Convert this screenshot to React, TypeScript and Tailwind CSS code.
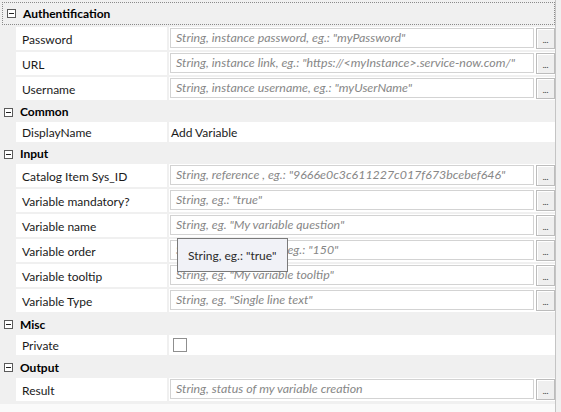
import React from "react";

type Row =
  | { label: string; kind: "input"; ph: string }
  | { label: string; kind: "text"; value: string }
  | { label: string; kind: "check" };

type Section = { title: string; rows: Row[]; h: string };

const SECTIONS: Section[] = [
  {
    title: "Authentification",
    h: "h-[23px]",
    rows: [
      { label: "Password", kind: "input", ph: 'String, instance password, eg.: "myPassword"' },
      { label: "URL", kind: "input", ph: 'String, instance link, eg.: "https://<myInstance>.service-now.com/"' },
      { label: "Username", kind: "input", ph: 'String, instance username, eg.: "myUserName"' },
    ],
  },
  {
    title: "Common",
    h: "h-[20px]",
    rows: [{ label: "DisplayName", kind: "text", value: "Add Variable" }],
  },
  {
    title: "Input",
    h: "h-[20px]",
    rows: [
      { label: "Catalog Item Sys_ID", kind: "input", ph: 'String, reference , eg.: "9666e0c3c611227c017f673bcebef646"' },
      { label: "Variable mandatory?", kind: "input", ph: 'String, eg.: "true"' },
      { label: "Variable name", kind: "input", ph: 'String, eg. "My variable question"' },
      { label: "Variable order", kind: "input", ph: 'String, variable order, eg.: "150"' },
      { label: "Variable tooltip", kind: "input", ph: 'String, eg. "My variable tooltip"' },
      { label: "Variable Type", kind: "input", ph: 'String, eg. "Single line text"' },
    ],
  },
  {
    title: "Misc",
    h: "h-[21px]",
    rows: [{ label: "Private", kind: "check" }],
  },
  {
    title: "Output",
    h: "h-[21px]",
    rows: [{ label: "Result", kind: "input", ph: "String, status of my variable creation" }],
  },
];

function Collapse() {
  return (
    <span className="w-[9px] h-[9px] border border-[#5a5a5a] bg-white flex items-center justify-center shrink-0">
      <span className="w-[5px] h-px bg-[#222]" />
    </span>
  );
}

function Header({ s, first }: { s: Section; first: boolean }) {
  return (
    <div
      className={`${s.h} flex items-center gap-[7px] pl-[4px] ${
        first ? "mt-[2px] mb-[2px] ml-[2px] pl-[2px] border border-dotted border-[#8a8a8a]" : ""
      }`}
    >
      <Collapse />
      <span className="text-[12px] font-bold text-black leading-none">{s.title}</span>
    </div>
  );
}

function PropRow({ r }: { r: Row }) {
  const tall = r.kind === "input";
  return (
    <div className={`flex mb-[2px] ${tall ? "h-[23px]" : "h-[20px]"}`}>
      <div className="w-[16px] shrink-0" />
      <div className="w-[151px] shrink-0 bg-white flex items-center pl-[6px] pt-[2px] text-[12px] text-[#1a1a1a]">
        {r.label}
      </div>
      <div className="w-[2px] shrink-0" />
      <div className="flex-1 bg-white flex min-w-0">
        {r.kind === "input" && (
          <div className="flex flex-1 items-start pt-[1px] pl-[1px] gap-[2px] min-w-0">
            <div className="flex-1 h-[20px] border border-[#d3d3d3] bg-white flex items-center pl-[5px] pt-[1px] text-[12.4px] italic text-[#878787] whitespace-nowrap overflow-hidden min-w-0">
              {r.ph}
            </div>
            <div className="w-[19px] h-[21px] shrink-0 border border-[#bcbcbc] bg-[#efefef] shadow-[inset_1px_1px_0_#fff] flex items-end justify-center pb-[4px] text-[8px] leading-none text-[#4a4a4a] font-bold">
              ...
            </div>
          </div>
        )}
        {r.kind === "text" && (
          <div className="flex items-center pl-[2px] pt-[2px] text-[12px] text-[#1a1a1a]">{r.value}</div>
        )}
        {r.kind === "check" && (
          <div className="flex items-center pl-[4px]">
            <span className="w-[14px] h-[14px] border border-[#8f8f8f] bg-white" />
          </div>
        )}
      </div>
    </div>
  );
}

export default function App() {
  return (
    <div className="w-[561px] h-[412px] bg-[#f0f0f0] flex overflow-hidden relative font-[Lato,'Noto_Sans',sans-serif]">
      <div className="w-[556px] border-r border-[#c4c4c4] flex flex-col">
        {SECTIONS.map((s, i) => (
          <div key={s.title}>
            <Header s={s} first={i === 0} />
            {s.rows.map((r) => (
              <PropRow key={r.label} r={r} />
            ))}
          </div>
        ))}
        <div className="flex-1 bg-[#fafafa] mt-[1px]" />
      </div>
      <div className="flex-1" />

      <div className="absolute left-[177px] top-[238px] w-[111px] h-[34px] border border-[#7a7a7a] bg-[#f1f2f7] flex items-center pl-[10px] pt-[2px] text-[12px] text-[#2a2a2a] whitespace-nowrap">
        String, eg.: "true"
      </div>
    </div>
  );
}
